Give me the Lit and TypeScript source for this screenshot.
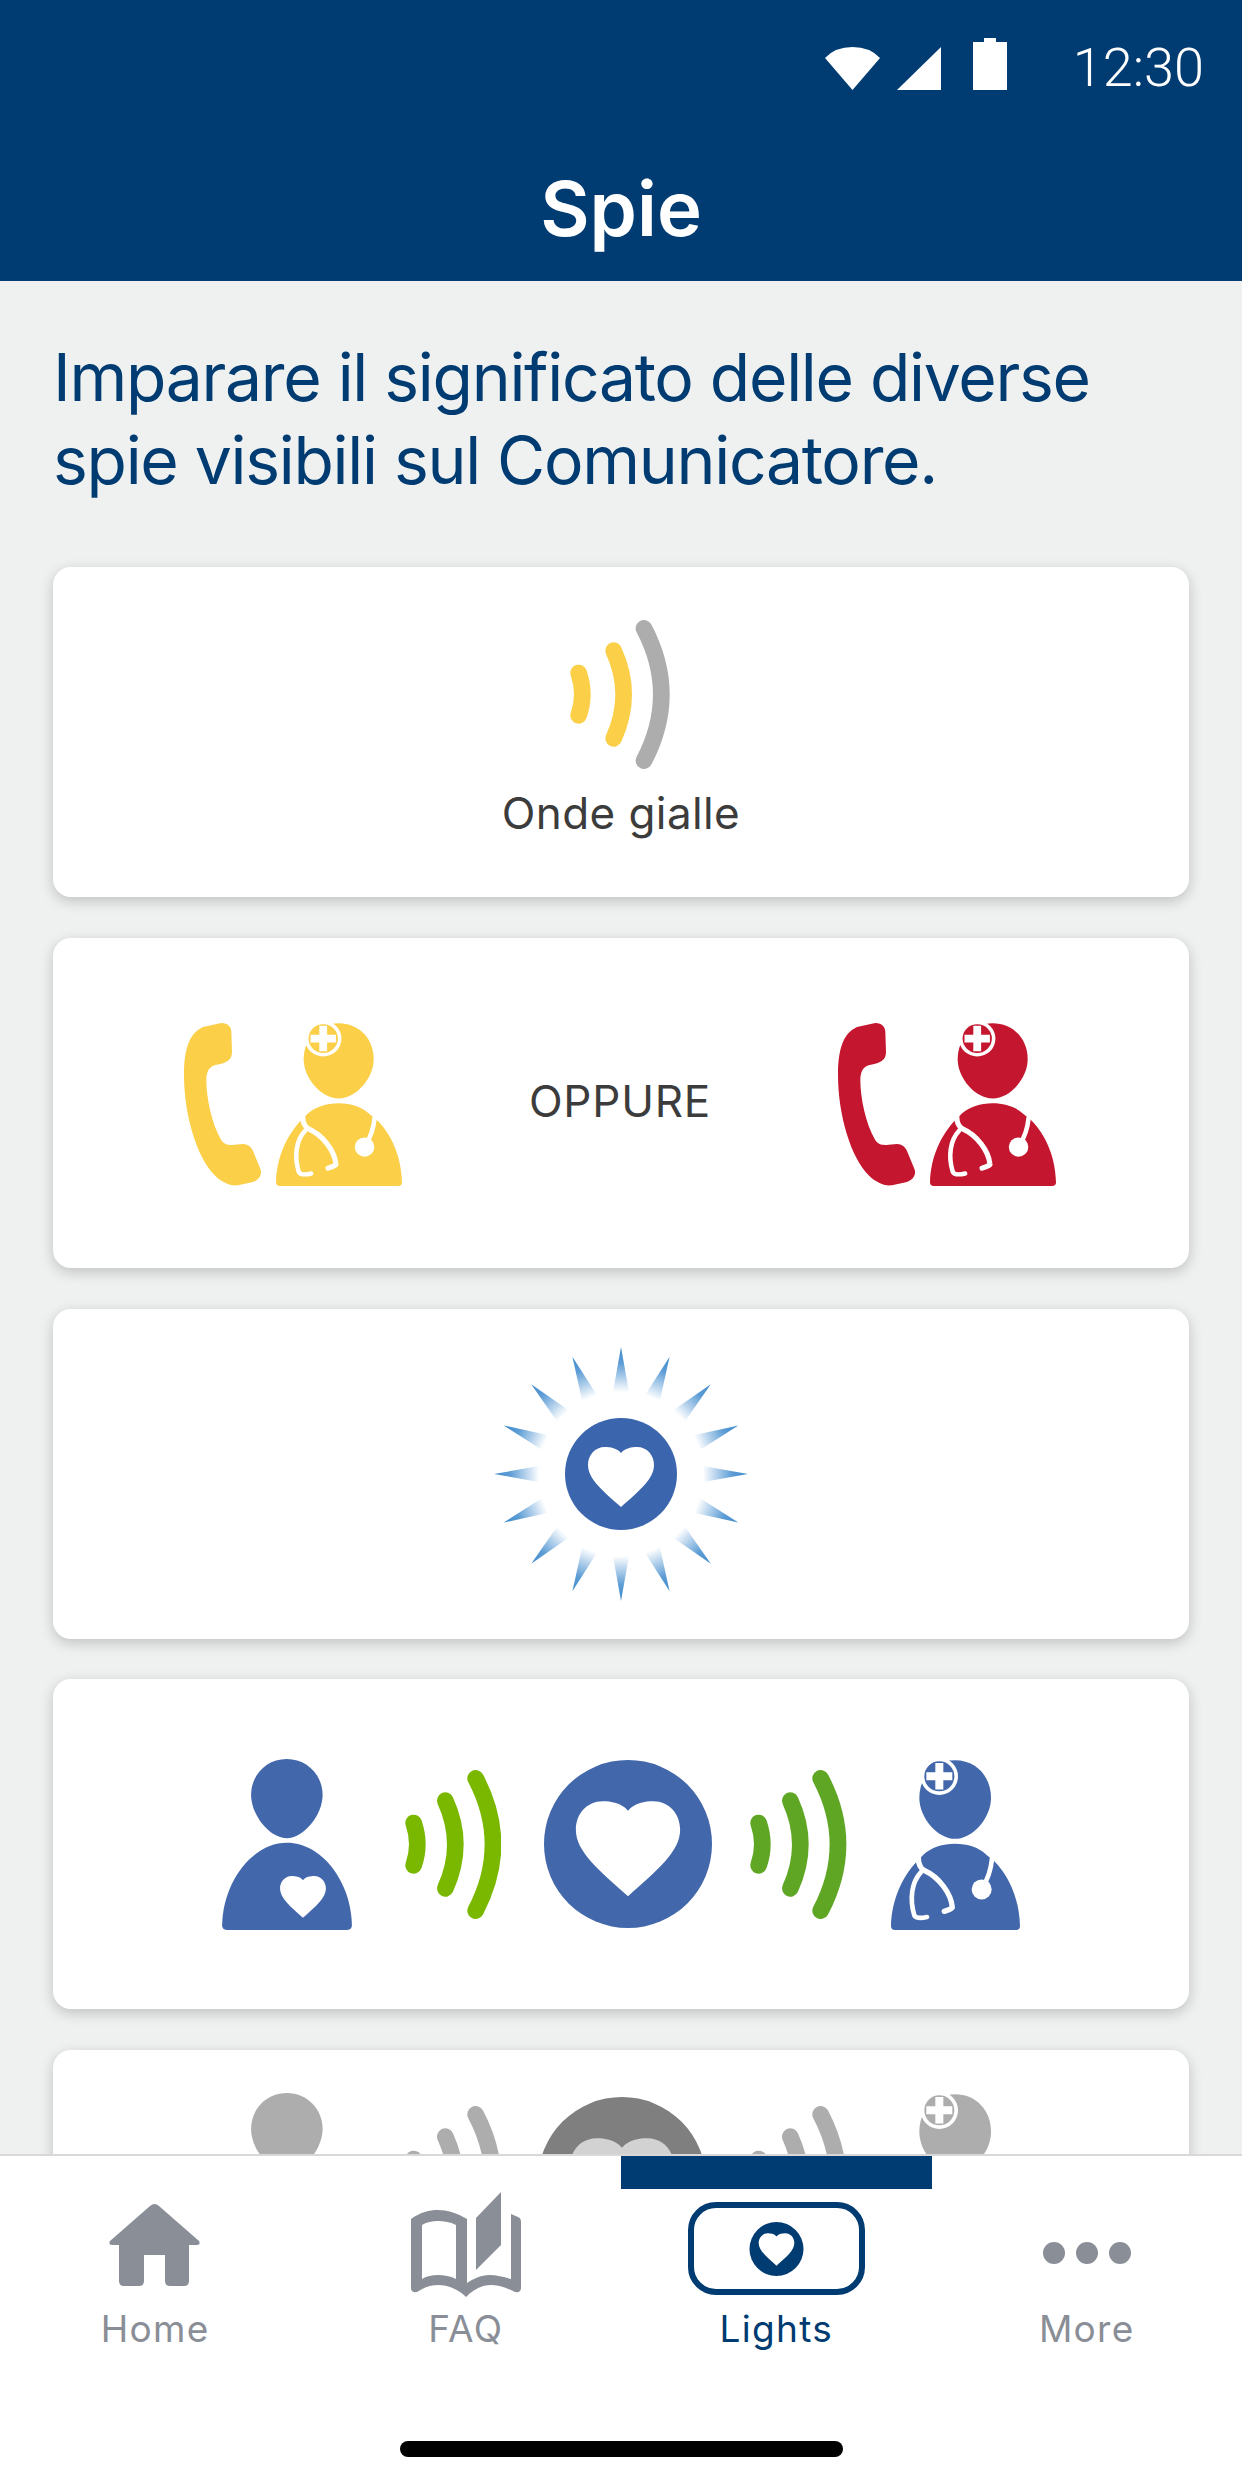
import { LitElement, html, svg, css } from "lit";
import { customElement } from "lit/decorators.js";

const NAVY = "#003b71";
const YELLOW = "#fbcf47";
const RED = "#c4162e";
const BLUE = "#4267ab";
const GRAY = "#adadad";

const HEART =
    "M0 -21C4 -26 11 -27 16 -27C26 -27 33 -19 33 -9C33 5 18 17 0 33C-18 17 -33 5 -33 -9C-33 -19 -26 -27 -16 -27C-11 -27 -4 -26 0 -21Z";

// All the figures below were traced from a 3x crop, so their viewBoxes are 3x the drawn size
const waves = (a: string, b: string, c: string, spread = 0) => html`
    <svg class="waves" width=${(289 + spread) / 3} height="149" viewBox="${-spread} 0 ${289 + spread} 447">
        <g fill="none" stroke-width="50" stroke-linecap="round">
            <path d="M26 159Q48 223 26 286" stroke=${a} transform="translate(${-spread} 0)"></path>
            <path d="M121 92Q181 223 121 355" stroke=${b}></path>
            <path d="M212 25Q316 223 212 422" stroke=${c}></path>
        </g>
    </svg>
`;

const person = (fill: string) => html`
    <svg width="130" height="171" viewBox="0 0 390 514">
        <path fill=${fill} d="M194 0C255 0 302 48 302 108C302 168 245 238 194 238C143 238 87 168 87 108C87 48 133 0 194 0Z"></path>
        <path fill=${fill} d="M0 500C2 370 90 252 195 252C300 252 388 370 390 500Q390 514 376 514H14Q0 514 0 500Z"></path>
        <path fill="#fff" transform="translate(243 408) scale(2.09)" d=${HEART}></path>
    </svg>
`;

const doctor = (fill: string, w = 129, h = 171) => html`
    <svg width=${w} height=${h} viewBox="0 0 387 514" preserveAspectRatio="none">
        <path fill=${fill} d="M192 4C255 4 300 52 300 117C300 177 245 240 192 240C140 240 85 177 85 117C85 52 130 4 192 4Z"></path>
        <circle cx="145" cy="52" r="56" fill="#fff"></circle>
        <circle cx="145" cy="52" r="45" fill=${fill}></circle>
        <path fill="#fff" d="M133 12H157V40H184V64H157V92H133V64H106V40H133Z"></path>
        <path fill=${fill} d="M0 502C2 422 35 352 78 307L98 287C120 267 155 255 192 255C230 255 265 267 285 287L310 307C355 352 385 422 387 502Q387 514 375 514H12Q0 514 0 502Z"></path>
        <g fill="none" stroke="#fff" stroke-linecap="round" stroke-linejoin="round">
            <path stroke-width="16" d="M82 295Q82 325 100 335C145 355 180 405 184 445Q186 450 160 458"></path>
            <path stroke-width="14" d="M90 340C62 370 55 420 70 470Q76 482 108 475"></path>
            <path stroke-width="14" d="M303 300Q298 350 275 385"></path>
            <path stroke-width="14" d="M82 295L66 290" stroke-linecap="butt"></path>
        </g>
        <circle cx="272" cy="392" r="30" fill="#fff"></circle>
    </svg>
`;

const phone = (fill: string) => html`
    <svg width="78" height="163" viewBox="103 128 234 489">
        <path fill=${fill} d="M215 128C235 128 245 140 245 155L247 215C247 235 235 245 215 250L195 255C178 260 170 275 170 300C170 350 185 430 215 480C225 495 240 495 255 493L280 491C295 491 305 500 310 512L332 565C340 585 325 600 310 605L265 615C240 618 215 605 195 585C140 530 103 400 103 285C103 215 115 160 160 140Z"></path>
    </svg>
`;

const bigHeart = (disc: string, heart: string) => html`
    <svg class="disc" width="168" height="168" viewBox="-84 -84 168 168">
        <circle r="84" fill=${disc}></circle>
        <path fill=${heart} transform="scale(1.58)" d=${HEART}></path>
    </svg>
`;

const sunburst = () => html`
    <svg width="260" height="260" viewBox="-130 -130 260 260">
        <defs>
            <linearGradient id="ray" gradientUnits="userSpaceOnUse" x1="0" y1="-127" x2="0" y2="-82">
                <stop offset="0" stop-color="#3f8acb"></stop>
                <stop offset="0.35" stop-color="#5c9cd5"></stop>
                <stop offset="1" stop-color="#5c9cd5" stop-opacity="0"></stop>
            </linearGradient>
        </defs>
        ${Array.from({ length: 16 }, (_, i) => svg`
            <polygon points="0,-127 8,-82 -8,-82" fill="url(#ray)" transform="rotate(${i * 22.5})"></polygon>
        `)}
        <circle r="56" fill="#3b66ae"></circle>
        <path fill="#fff" d=${HEART}></path>
    </svg>
`;

const homeIcon = html`
    <svg width="92" height="84" viewBox="0 0 92 84">
        <path d="M41 3Q45.500 -1 50 3L90 38Q92 42 88 42H80V78Q80 83 75 83H61Q56 83 56 78V52H35V78Q35 83 30 83H15Q10 83 10 78V42H3Q-1 42 1 38Z"></path>
    </svg>
`;

const faqIcon = html`
    <svg width="110" height="105" viewBox="0 0 110 105">
        <path fill-rule="evenodd" d="M0 27C10 20 18 18 27 18C36 18 46 21 56 27V91C62 87 70 83 78 83C86 83 93 85 100 87V22L107 25Q110 26 110 30V96Q110 101 104 100C96 96 88 93 80 93C70 93 62 98 55 105C48 98 38 93 27 93C19 93 12 96 6 100Q0 101 0 96ZM11 33V87C16 84 21 83 27 83C33 83 39 84 45 87V33C39 30 33 29 27 29C21 29 16 30 11 33Z"></path>
        <path d="M90 0V53L65 78V26Z"></path>
    </svg>
`;

const lightsIcon = html`
    <svg width="55" height="56" viewBox="-28 -28 56 56">
        <circle r="27.500" fill=${NAVY}></circle>
        <path fill="#fff" transform="scale(0.55) translate(0 -2)" d=${HEART}></path>
    </svg>
`;

@customElement("app-root")
export class AppRoot extends LitElement {
    static styles = css`
        :host {
            display: flex;
            flex-direction: column;
            height: 2484px;
            overflow: hidden;
            background: #eff1f0;
            font-family: Inter, "Liberation Sans", sans-serif;
        }

        svg {
            display: block;
            flex-shrink: 0;
        }

        /* Blue header with status bar */
        .header {
            flex-shrink: 0;
            height: 281px;
            box-sizing: border-box;
            padding-top: 38px;
            background: #003b71;
            color: #fff;
        }

        .status {
            display: flex;
            justify-content: flex-end;
            align-items: flex-end;
            height: 52px;
            padding-right: 38px;
        }

        .status svg {
            fill: #fff;
        }

        .wifi {
            margin-right: 17px;
        }

        .signal {
            margin-right: 32px;
        }

        .battery {
            margin-right: 66px;
        }

        .time {
            font-family: Roboto, sans-serif;
            font-weight: 300;
            font-size: 54px;
            line-height: 52px;
            position: relative;
            top: 4px;
        }

        .title {
            margin: 72px 0 0;
            text-align: center;
            font-size: 76px;
            line-height: 92px;
            font-weight: 600;
        }

        /* Scrolling content */
        .content {
            flex: 1;
            min-height: 0;
            overflow: hidden;
            padding: 0 53px;
        }

        .intro {
            margin: 55px 0 65px;
            font-size: 66px;
            line-height: 83px;
            letter-spacing: -1.3px;
            color: #003b71;
        }

        .cards {
            display: flex;
            flex-direction: column;
            gap: 40.750px;
        }

        .card {
            flex-shrink: 0;
            display: flex;
            justify-content: center;
            align-items: center;
            box-sizing: border-box;
            height: 330px;
            background: #fff;
            border-radius: 18px;
            box-shadow: 0 4px 14px rgba(0, 0, 0, 0.2);
        }

        .card-stack {
            flex-direction: column;
            justify-content: flex-start;
            padding-top: 53px;
        }

        .card-stack .waves {
            margin-right: 2px;
        }

        .card-label {
            margin-top: 17px;
            font-size: 44px;
            line-height: 54px;
            letter-spacing: 0.4px;
            color: #3c3c3c;
        }

        .card-calls {
            justify-content: flex-start;
            padding: 2px 0 0 131px;
        }

        .call {
            display: flex;
            align-items: flex-end;
            gap: 14px;
        }

        .or {
            width: 436px;
            margin-top: -5px;
            text-align: center;
            font-size: 44px;
            letter-spacing: 0.8px;
            color: #3c3c3c;
        }

        .card-chain {
            justify-content: flex-start;
            padding-left: 169px;
        }

        .card-chain svg:nth-of-type(2) {
            margin-left: 53px;
        }

        .card-chain svg:nth-of-type(3) {
            margin-left: 43px;
        }

        .card-chain svg:nth-of-type(4) {
            margin-left: 38px;
        }

        .card-chain svg:nth-of-type(5) {
            margin-left: 44px;
        }

        .card-off {
            align-items: flex-start;
            padding-top: 43px;
        }

        /* the greyed-out heart sits a little left of the blue one */
        .card-off svg.disc {
            margin: 4px 6px 0 37px;
        }

        .card-off .waves {
            margin-top: 13px;
        }

        /* Tab bar */
        .tabs {
            flex-shrink: 0;
            position: relative;
            display: grid;
            grid-template-columns: repeat(4, 1fr);
            height: 330px;
            box-sizing: border-box;
            border-top: 2px solid #d8d8d8;
            background: #fff;
            fill: #8a8e97;
            color: #8a8e97;
        }

        .tab {
            display: flex;
            flex-direction: column;
            align-items: center;
            padding-top: 36px;
        }

        .tab-active {
            color: #003b71;
            padding-top: 0;
        }

        .tab-bar {
            align-self: stretch;
            height: 33px;
            margin-bottom: 3px;
            background: #003b71;
        }

        .slot {
            display: flex;
            align-items: center;
            justify-content: center;
            height: 105px;
        }

        .lights-frame {
            display: flex;
            align-items: center;
            justify-content: center;
            box-sizing: border-box;
            width: 177px;
            height: 93px;
            margin-top: 8px;
            border: 6px solid #003b71;
            border-radius: 28px;
        }

        .dots {
            display: flex;
            gap: 11px;
            margin-top: 17px;
        }

        .dots span {
            width: 22px;
            height: 22px;
            border-radius: 50%;
            background: #8a8e97;
        }

        .label {
            margin-top: 9px;
            font-size: 37px;
            line-height: 46px;
            letter-spacing: 1.3px;
        }

        .home-indicator {
            position: absolute;
            left: 400px;
            top: 285px;
            width: 443px;
            height: 16px;
            border-radius: 8px;
            background: #000;
        }
    `;

    render() {
        return html`
            <header class="header">
                <div class="status">
                    <svg class="wifi" width="55" height="43" viewBox="0 0 55 43">
                        <path d="M0 11Q10 0 27.500 0Q45 0 55 11L27.500 43Z"></path>
                    </svg>
                    <svg class="signal" width="44" height="43" viewBox="0 0 44 43">
                        <path d="M44 0V43H0Z"></path>
                    </svg>
                    <svg class="battery" width="34" height="52" viewBox="0 0 34 52">
                        <path d="M11 0H23V4H34V52H0V4H11Z"></path>
                    </svg>
                    <span class="time">12:30</span>
                </div>
                <h1 class="title">Spie</h1>
            </header>

            <main class="content">
                <p class="intro">Imparare il significato delle diverse<br />spie visibili sul Comunicatore.</p>
                <div class="cards">
                    <section class="card card-stack">
                        ${waves(YELLOW, YELLOW, GRAY, 10)}
                        <span class="card-label">Onde gialle</span>
                    </section>
                    <section class="card card-calls">
                        <div class="call">${phone(YELLOW)}${doctor(YELLOW, 126, 164)}</div>
                        <span class="or">OPPURE</span>
                        <div class="call">${phone(RED)}${doctor(RED, 126, 164)}</div>
                    </section>
                    <section class="card">${sunburst()}</section>
                    <section class="card card-chain">
                        ${person(BLUE)} ${waves("#7ab800", "#7ab800", "#7ab800")} ${bigHeart(BLUE, "#fff")}
                        ${waves("#5fa625", "#5fa625", "#5fa625")} ${doctor(BLUE)}
                    </section>
                    <section class="card card-chain card-off">
                        ${person(GRAY)} ${waves(GRAY, GRAY, GRAY)} ${bigHeart("#7f7f7f", "#d2d2d2")}
                        ${waves(GRAY, GRAY, GRAY)} ${doctor(GRAY)}
                    </section>
                </div>
            </main>

            <nav class="tabs">
                <div class="tab">
                    <div class="slot">${homeIcon}</div>
                    <span class="label">Home</span>
                </div>
                <div class="tab">
                    <div class="slot">${faqIcon}</div>
                    <span class="label">FAQ</span>
                </div>
                <div class="tab tab-active">
                    <div class="tab-bar"></div>
                    <div class="slot"><div class="lights-frame">${lightsIcon}</div></div>
                    <span class="label">Lights</span>
                </div>
                <div class="tab">
                    <div class="slot">
                        <div class="dots"><span></span><span></span><span></span></div>
                    </div>
                    <span class="label">More</span>
                </div>
                <div class="home-indicator"></div>
            </nav>
        `;
    }
}
